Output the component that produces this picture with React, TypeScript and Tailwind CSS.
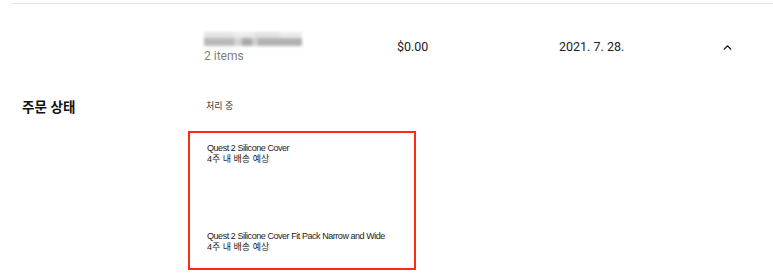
import { ChevronUp } from "lucide-react";

const sans = "font-['Roboto','Liberation_Sans','Noto_Sans_CJK_KR',sans-serif]";
const small = "font-['Liberation_Sans','Noto_Sans_CJK_KR',sans-serif]";

function BlurredName() {
  // the product name is blurred out in the screenshot
  return (
    <div className="w-[98px] h-[14px] flex flex-col blur-[1.5px]">
      <div className="h-[6px] flex">
        <div className="w-[30px] bg-[#e4e4e4]" />
        <div className="w-[20px] bg-[#ececec]" />
        <div className="w-[26px] bg-[#e2e2e2]" />
        <div className="w-[22px] bg-[#ebebeb]" />
      </div>
      <div className="h-[8px] flex">
        <div className="w-[30px] bg-[#b8b8b8]" />
        <div className="w-[8px] bg-[#d4d4d4]" />
        <div className="w-[10px] bg-[#a9a9a9]" />
        <div className="w-[6px] bg-[#cfcfcf]" />
        <div className="w-[44px] bg-[#b2b2b2]" />
      </div>
    </div>
  );
}

function ItemLine({ name }: { name: string }) {
  return (
    <div className={`${small} text-[9px] leading-[11px] text-[#222] whitespace-nowrap`}>
      <div className="tracking-[-0.45px]">{name}</div>
      <div>4주 내 배송 예상</div>
    </div>
  );
}

export default function App() {
  return (
    <div className="w-[773px] h-[278px] bg-white overflow-hidden">
      <div className="pt-[3px] pl-[12px]">
        <div className="h-px bg-[#e4e4e4]" />
      </div>

      {/* order summary row */}
      <div className={`${sans} flex pt-[28px]`}>
        <div className="w-[204px]" />
        <div className="w-[193px]">
          <BlurredName />
          <div className="text-[12px] leading-[16px] mt-[2px] text-[#808080]">2 items</div>
        </div>
        <div className="w-[162px] h-[30px] flex items-center text-[12.5px] text-[#222]">$0.00</div>
        <div className="w-[162px] h-[30px] flex items-center text-[12.5px] text-[#222]">2021. 7. 28.</div>
        <div className="h-[30px] flex items-center">
          <ChevronUp size={13} strokeWidth={2.6} className="text-[#111]" />
        </div>
      </div>

      {/* status */}
      <div className="flex mt-[34px]">
        <div className={`${small} w-[188px] pl-[22px] pt-[1px] text-[13.5px] font-bold text-[#111] leading-[18px]`}>
          주문 상태
        </div>
        <div>
          <div className={`${small} pl-[18px] pt-[2px] text-[9px] leading-[12px] text-[#333]`}>처리 중</div>
          <div className="mt-[19px] w-[228px] border-2 border-[#ff2a12] pl-[17px] pt-[10px] pb-[15px]">
            <ItemLine name="Quest 2 Silicone Cover" />
            <div className="mt-[66px]">
              <ItemLine name="Quest 2 Silicone Cover Fit Pack Narrow and Wide" />
            </div>
          </div>
        </div>
      </div>
    </div>
  );
}
